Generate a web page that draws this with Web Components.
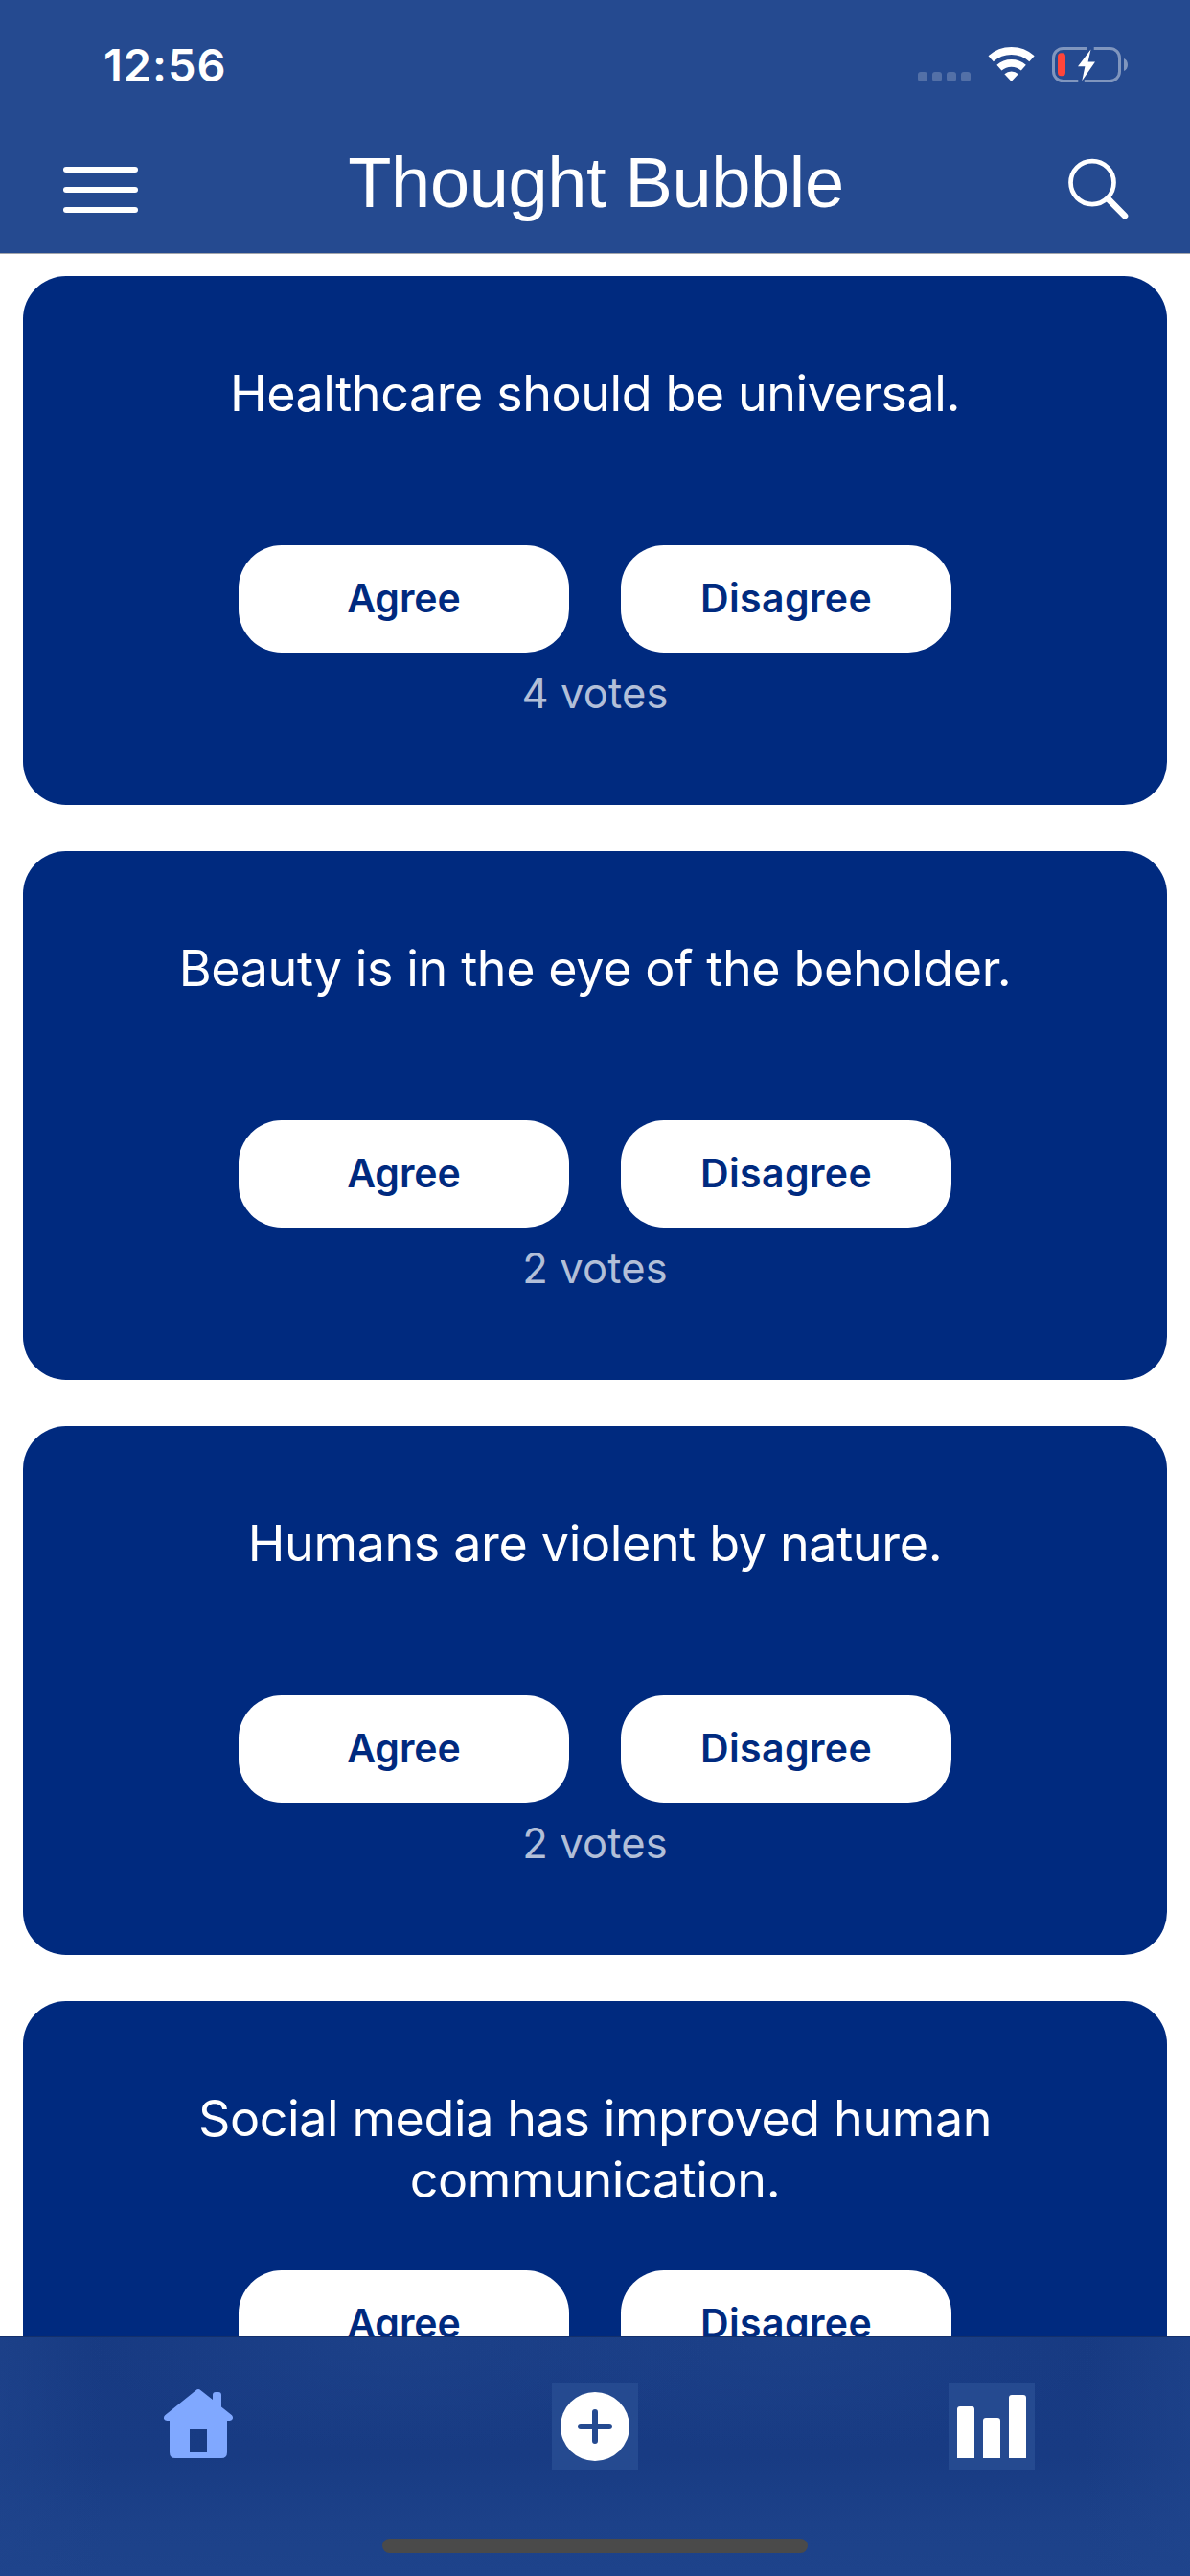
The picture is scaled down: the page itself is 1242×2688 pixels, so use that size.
<!DOCTYPE html>
<html lang="en">
<head>
<meta charset="utf-8">
<title>Thought Bubble</title>
<style>
html, body { margin: 0; height: 2688px; overflow: hidden; background: #fff; }
body { font-family: Inter, "Noto Sans", sans-serif; }
</style>
</head>
<body>
<thought-app>
  <thought-header slot="header">Thought Bubble</thought-header>
  <thought-card votes="4 votes" style="--track:-.42px">Healthcare should be universal.</thought-card>
  <thought-card votes="2 votes" style="--track:-.37px">Beauty is in the eye of the beholder.</thought-card>
  <thought-card votes="2 votes" style="--track:-.34px">Humans are violent by nature.</thought-card>
  <thought-card votes="3 votes" style="--track:-.39px">Social media has improved human communication.</thought-card>
  <thought-tabs slot="tabs"></thought-tabs>
</thought-app>
<script>
function define(name, html) {
  const template = document.createElement('template');
  template.innerHTML = html;
  customElements.define(name, class extends HTMLElement {
    connectedCallback() {
      if (this.shadowRoot) return;
      const root = this.attachShadow({ mode: 'open' });
      root.append(template.content.cloneNode(true));
      const votes = root.querySelector('.votes');
      if (votes) votes.textContent = this.getAttribute('votes');
    }
  });
}

define('status-bar', `
<style>
:host { display: flex; justify-content: space-between; align-items: flex-start; box-sizing: border-box; height: 132px; padding: 38px 62px 0 108px; }
.time { font: 600 47px/60px Inter, sans-serif; letter-spacing: .95px; }
svg { display: block; margin-top: 10px; }
</style>
<div class="time">12:56</div>
<svg width="222" height="40" viewBox="958 48 222 40" fill="#fff">
  <g opacity=".21">
    <rect x="958" y="75" width="10" height="10" rx="3"/><rect x="973" y="75" width="10" height="10" rx="3"/>
    <rect x="988" y="75" width="10" height="10" rx="3"/><rect x="1003" y="75" width="10" height="10" rx="3"/>
  </g>
  <g fill="none" stroke="#fff">
    <path stroke-width="8" d="M1034.2 61.2A32 32 0 0 1 1077 61.2"/>
    <path stroke-width="7.6" d="M1042.9 70.7A19.1 19.1 0 0 1 1068.3 70.7"/>
  </g>
  <path d="M1055.6 85L1048.4 77.3A10.8 10.8 0 0 1 1062.8 77.3Z"/>
  <g opacity=".42">
    <path fill="none" stroke="#fff" stroke-width="3" d="M1134.8 50.5H1109.5A10 10 0 0 0 1099.5 60.5V74.5A10 10 0 0 0 1109.5 84.5H1125.3M1141.7 50.5H1158.5A10 10 0 0 1 1168.5 60.5V74.5A10 10 0 0 1 1158.5 84.5H1131.8"/>
    <path d="M1173 61C1178.3 63 1178.3 72 1173 74Z"/>
  </g>
  <rect x="1104" y="55.3" width="8" height="24" rx="3.6" fill="#ff453a"/>
  <path d="M1138.5 51.5L1125 69.3H1132.4L1129.3 84.2L1143 64.6H1135.6Z"/>
</svg>
`);

define('thought-header', `
<style>
:host { display: block; color: #fff; background: #254a90; border-bottom: 1px solid #a2a5ab; }
nav { display: flex; align-items: flex-start; justify-content: space-between; box-sizing: border-box; height: 132px; padding: 18px 64px 0 66px; }
h1 { margin: 1px 0 0; font: 400 74px/80px "Liberation Sans", sans-serif; letter-spacing: -.36px; }
.menu { display: flex; flex-direction: column; gap: 15px; width: 78px; padding-top: 24px; }
.menu i { height: 6px; border-radius: 3px; background: #fff; }
svg { display: block; margin: 12px 0 0 12px; }
</style>
<status-bar></status-bar>
<nav>
  <div class="menu"><i></i><i></i><i></i></div>
  <h1><slot></slot></h1>
  <svg width="66" height="68" viewBox="1112 162 66 68" fill="none" stroke="#fff">
    <circle cx="1140" cy="190.6" r="22.5" stroke-width="4.7"/>
    <path d="M1156.6 207.6L1174 225.2" stroke-width="6.6" stroke-linecap="round"/>
  </svg>
</nav>
`);

define('vote-button', `
<style>
:host { display: flex; align-items: center; justify-content: center; box-sizing: border-box; width: 345px; height: 112px; padding-bottom: 2px; border-radius: 45px; background: #fff; color: #002a7f; font: 600 41px/50px Inter, sans-serif; letter-spacing: var(--spread, 0); }
</style>
<slot></slot>
`);

define('thought-card', `
<style>
:host { display: flex; flex-direction: column; align-items: center; box-sizing: border-box; flex: none; height: 552px; padding-top: 91px; border-radius: 45px; background: #002a7f; color: #fff; }
.statement { width: 900px; height: 190px; text-align: center; font: 400 52px/64px Inter, sans-serif; letter-spacing: var(--track, 0); }
.actions { display: flex; gap: 54px; }
.votes { margin-top: 15px; font: 400 43.5px/54px Inter, sans-serif; letter-spacing: .15px; color: #b2bfd8; }
</style>
<div class="statement"><slot></slot></div>
<div class="actions">
  <vote-button>Agree</vote-button>
  <vote-button style="--spread:.4px">Disagree</vote-button>
</div>
<div class="votes"></div>
`);

define('thought-tabs', `
<style>
:host { display: flex; flex-direction: column; align-items: center; box-sizing: border-box; height: 250px; border-top: 1px solid #14306b;
  background:
    radial-gradient(ellipse 330px 120px at 421px 0, #20458da0, #20458d00),
    radial-gradient(ellipse 330px 120px at 821px 0, #20458da0, #20458d00),
    linear-gradient(90deg, #20458d90, #20458d00 110px, #20458d00 1132px, #20458d90),
    linear-gradient(#173a82, #183b83 50%, #1c4189 78%, #1e438b); }
.tabs { display: flex; align-self: stretch; height: 210px; padding-top: 48px; box-sizing: border-box; }
.tab { flex: 1; display: flex; justify-content: center; }
svg { display: block; }
.indicator { width: 444px; height: 15px; border-radius: 8px; background: #4a4a4a; }
</style>
<div class="tabs">
  <div class="tab"><svg width="90" height="90" viewBox="162 2487 90 90" fill="#80a8ff">
    <path fill-rule="evenodd" d="M204.4 2494.2Q207 2492 209.6 2494.2L222 2504V2499Q222 2496 225 2496H228Q231 2496 231 2499V2511.5L242 2520.3Q243.6 2522 242.7 2524.2Q241.8 2526 239.5 2526H237V2559Q237 2565 231 2565H183Q177 2565 177 2559V2526H174.5Q172 2526 171.2 2524.2Q170.4 2522 172.2 2520.2ZM198 2535V2559H216V2535Z"/>
  </svg></div>
  <div class="tab"><svg width="90" height="90" viewBox="0 0 90 90">
    <rect width="90" height="90" fill="#254a90"/><circle cx="45" cy="45" r="36" fill="#fff"/>
    <path d="M45 30V60M30 45H60" stroke="#254a90" stroke-width="6" stroke-linecap="round"/>
  </svg></div>
  <div class="tab"><svg width="90" height="90" viewBox="0 0 90 90" fill="#fff">
    <rect width="90" height="90" fill="#254a90"/>
    <path d="M9 78V27Q9 24 12 24H24Q27 24 27 27V78ZM36 78V39Q36 36 39 36H51Q54 36 54 39V78ZM63 78V15Q63 12 66 12H78Q81 12 81 15V78Z"/>
  </svg></div>
</div>
<div class="indicator"></div>
`);

define('thought-app', `
<style>
:host { display: flex; flex-direction: column; width: 1242px; height: 2688px; overflow: hidden; }
.feed { flex: 1; min-height: 0; overflow: hidden; display: flex; flex-direction: column; gap: 48px; padding: 23px 24px 0; }
</style>
<slot name="header"></slot>
<main class="feed"><slot></slot></main>
<slot name="tabs"></slot>
`);
</script>
</body>
</html>
